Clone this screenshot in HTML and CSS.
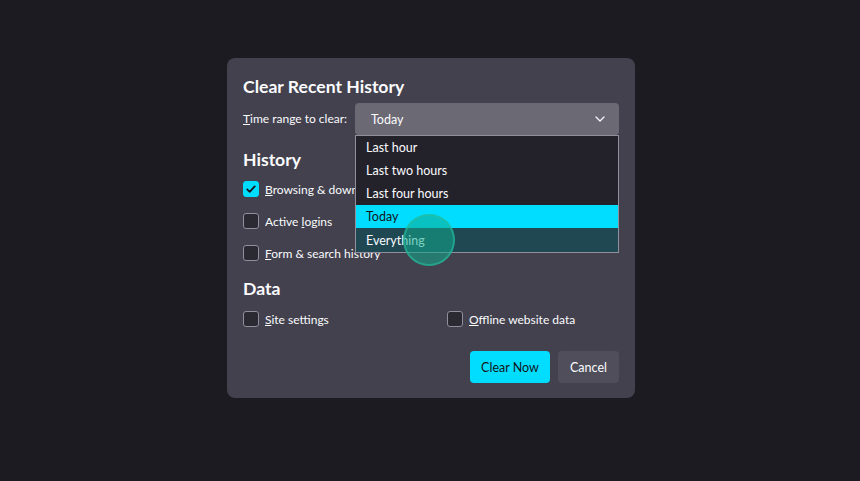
FILE: index.html
```html
<!DOCTYPE html>
<html lang="en">
<head>
<meta charset="utf-8">
<title>Clear Recent History</title>
<link rel="stylesheet" href="styles.css">
</head>
<body>
<div class="stage">
  <div class="dialog">
    <h1 class="title">Clear Recent History</h1>
    <div class="range-row">
      <span class="range-label"><u>T</u>ime range to clear:</span>
      <div class="select">
        <span class="select-value">Today</span>
        <svg class="chevron" width="10" height="6" viewBox="0 0 10 6"><path d="M1 1l4 4 4-4" fill="none" stroke="#fbfbfe" stroke-width="1.2" stroke-linecap="round" stroke-linejoin="round"/></svg>
        <ul class="menu">
          <li class="menu-item">Last hour</li>
          <li class="menu-item">Last two hours</li>
          <li class="menu-item">Last four hours</li>
          <li class="menu-item selected">Today</li>
          <li class="menu-item hovered">Everything</li>
        </ul>
      </div>
    </div>

    <h2 class="section">History</h2>
    <div class="checks">
      <label class="check"><span class="box checked"><svg width="12" height="12" viewBox="0 0 12 12"><path d="M2.2 6.4l2.5 2.4 5-5.4" fill="none" stroke="#15141a" stroke-width="1.8" stroke-linecap="round" stroke-linejoin="round"/></svg></span><span class="clipped"><u>B</u>rowsing &amp; download history</span></label>
      <label class="check"><span class="box"></span><span>Active <u>l</u>ogins</span></label>
      <label class="check"><span class="box"></span><span><u>F</u>orm &amp; search history</span></label>
    </div>

    <h2 class="section data">Data</h2>
    <div class="checks grid">
      <label class="check"><span class="box"></span><span><u>S</u>ite settings</span></label>
      <label class="check"><span class="box"></span><span><u>O</u>ffline website data</span></label>
    </div>

    <div class="actions">
      <button class="btn primary">Clear Now</button>
      <button class="btn cancel">Cancel</button>
    </div>

    <span class="pointer"></span>
  </div>
</div>
</body>
</html>
```

FILE: styles.css
```css
* { box-sizing: border-box; }

html, body {
  margin: 0;
  height: 100%;
  background: #1c1b22;
}

body {
  font-family: "Segoe UI", Lato, "Noto Sans", sans-serif;
  color: #fbfbfe;
  font-size: 12px;
}

.stage {
  padding-top: 58px;
  padding-left: 2px;
  display: flex;
  justify-content: center;
}

.dialog {
  position: relative;
  width: 408px;
  background: #42414d;
  border-radius: 8px;
  padding: 18px 16px 15px 16px;
}

.title {
  margin: 0;
  font-size: 17.6px;
  line-height: 22px;
  font-weight: 700;
}

.range-row {
  margin-top: 5px;
  display: flex;
  align-items: center;
  gap: 8px;
}

.range-label {
  width: 104px;
  line-height: 32px;
  white-space: nowrap;
}

.select {
  position: relative;
  flex: 1;
  height: 32px;
  background: #6b6a74;
  border-radius: 4px;
  display: flex;
  align-items: center;
  padding: 0 14px 0 16px;
  font-size: 12.5px;
}

.select-value { flex: 1; }

.chevron { display: block; }

.menu {
  position: absolute;
  left: 0;
  right: 0;
  top: 32px;
  margin: 0;
  padding: 0;
  list-style: none;
  background: #23222b;
  border: 1px solid #8f8f9d;
  z-index: 2;
}

.menu-item {
  height: 23px;
  line-height: 23px;
  padding-left: 10px;
}

.menu-item.selected {
  background: #00ddff;
  color: #15141a;
}

.menu-item.hovered {
  background: #1f4853;
  height: 24px;
  line-height: 26px;
}

.section {
  margin: 14px 0 0;
  font-size: 17.6px;
  line-height: 22px;
  font-weight: 700;
}

.section.data { margin-top: 9px; }

.checks {
  margin-top: 2px;
  display: flex;
  flex-direction: column;
}

.checks.grid {
  margin-top: 3px;
  display: grid;
  grid-template-columns: 204px 1fr;
}

.check {
  height: 32px;
  display: flex;
  align-items: center;
  gap: 6px;
  white-space: nowrap;
}

/* label text that runs under the open menu is cut at its edge */
.clipped {
  max-width: 90px;
  overflow: hidden;
}

.box {
  flex: none;
  width: 16px;
  height: 16px;
  border: 1px solid #8f8f9d;
  border-radius: 3px;
  background: #2b2a33;
  display: flex;
  align-items: center;
  justify-content: center;
}

.box.checked {
  background: #00ddff;
  border-color: #00ddff;
}

.actions {
  margin-top: 16px;
  display: flex;
  justify-content: flex-end;
  gap: 8px;
}

.btn {
  font: inherit;
  font-size: 12.5px;
  height: 32px;
  border: none;
  border-radius: 4px;
  padding: 0;
  background: #4f4e5a;
  color: #fbfbfe;
}

.btn.primary {
  width: 80px;
  background: #00ddff;
  color: #15141a;
}

.btn.cancel { width: 61px; }

/* click ripple around the cursor */
.pointer {
  position: absolute;
  left: 176px;
  top: 156px;
  width: 52px;
  height: 52px;
  border-radius: 50%;
  background: rgba(16, 170, 140, 0.55);
  border: 2px solid rgba(40, 190, 160, 0.6);
  z-index: 3;
}
```
